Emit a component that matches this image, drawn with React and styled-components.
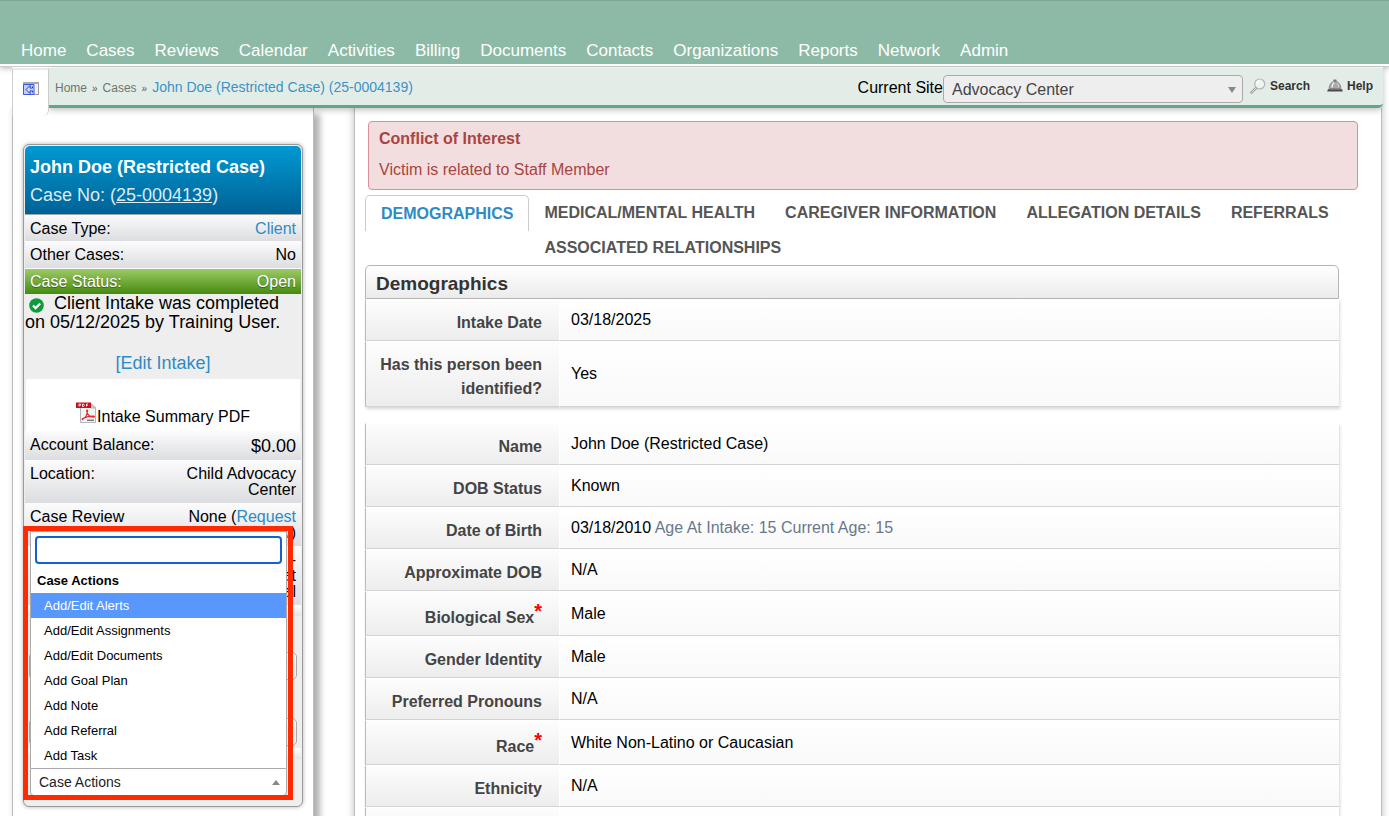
import React, { useState } from 'react'
import styled, { createGlobalStyle, css } from 'styled-components'

const navLinks = ['Home', 'Cases', 'Reviews', 'Calendar', 'Activities', 'Billing', 'Documents', 'Contacts', 'Organizations', 'Reports', 'Network', 'Admin']

const tabs = ['MEDICAL/MENTAL HEALTH', 'CAREGIVER INFORMATION', 'ALLEGATION DETAILS', 'REFERRALS', 'ASSOCIATED RELATIONSHIPS']

const actions = ['Add/Edit Alerts', 'Add/Edit Assignments', 'Add/Edit Documents', 'Add Goal Plan', 'Add Note', 'Add Referral', 'Add Task']

const intakeRows = [
  { label: 'Intake Date', value: '03/18/2025' },
  { label: 'Has this person been identified?', value: 'Yes' },
]

const personRows = [
  { label: 'Name', value: 'John Doe (Restricted Case)' },
  { label: 'DOB Status', value: 'Known' },
  { label: 'Date of Birth', value: '03/18/2010', note: 'Age At Intake: 15 Current Age: 15' },
  { label: 'Approximate DOB', value: 'N/A' },
  { label: 'Biological Sex', value: 'Male', required: true },
  { label: 'Gender Identity', value: 'Male' },
  { label: 'Preferred Pronouns', value: 'N/A' },
  { label: 'Race', value: 'White Non-Latino or Caucasian', required: true },
  { label: 'Ethnicity', value: 'N/A' },
  { label: '', value: '' },
]

const CollapseIcon = () => (
  <svg width="16" height="13" viewBox="0 0 16 13" aria-hidden="true">
    <rect x="0.5" y="0.5" width="15" height="12" fill="#f3f4fa" stroke="#9a9aa0" />
    <path d="M0 1h16" stroke="#a9a9ae" strokeWidth="2" />
    <path d="M.5 2.500v10H11v-10z" fill="#c3ceff" stroke="#3c57e6" />
    <path d="M3 7.500L7 3.500v2.500h2.500V4.500M7 9v2.500L3 7.500M7 9h2.500v1.500" fill="#fff" stroke="#1c36b8" />
  </svg>
)

const SearchIcon = () => (
  <svg width="16" height="16" viewBox="0 0 16 16" aria-hidden="true">
    <path d="M6.4 9.6L1.4 14.6" stroke="#9a9a9a" strokeWidth="2.4" strokeLinecap="round" />
    <path d="M6.4 9.6L1.6 14.4" stroke="#e3e3e3" strokeWidth="1" strokeLinecap="round" />
    <circle cx="9.7" cy="6" r="5" fill="#eef4f2" stroke="#b3b3b3" strokeWidth="1.2" />
    <path d="M6.8 6a3 3 0 0 1 3-3" fill="none" stroke="#fff" strokeWidth="1.2" />
  </svg>
)

const BellIcon = () => (
  <svg width="16" height="14" viewBox="0 0 16 14" aria-hidden="true">
    <rect x="6.3" y="0.5" width="3.4" height="2" rx="1" fill="#777" />
    <path d="M2.2 9.5C2.2 5 5 2.5 8 2.5s5.800 2.500 5.800 7z" fill="#a9a9a9" stroke="#777" strokeWidth="0.8" />
    <path d="M5 8.500c0-2.600.8-4 2.200-5" stroke="#f4f4f4" strokeWidth="1.4" fill="none" />
    <path d="M10 4c1.200 1.200 1.700 2.600 1.700 4.500" stroke="#d6d6d6" strokeWidth="1" fill="none" />
    <path d="M1 10h14l.8 2.500H.2z" fill="#4c4c50" />
    <path d="M1.500 10.300h13" stroke="#8b8b8f" strokeWidth="0.7" />
  </svg>
)

const CheckIcon = () => (
  <svg width="15" height="15" viewBox="0 0 15 15" aria-hidden="true">
    <circle cx="7.5" cy="7.5" r="7.3" fill="#0d9c39" />
    <path d="M4 7.500l2.600 2.600L11.200 5.400" fill="none" stroke="#fff" strokeWidth="2.200" />
  </svg>
)

const PdfIcon = () => (
  <svg width="21" height="21" viewBox="0 0 21 21" aria-hidden="true">
    <path d="M4.500 1.500H15l4.500 4.500v14.500h-15z" fill="#f3f3f3" stroke="#b5b5b5" />
    <path d="M15 1.500V6h4.500z" fill="#d2d2d2" stroke="#aaa" strokeWidth="0.8" />
    <rect x="0" y="0.5" width="15" height="5.500" fill="#c5141b" />
    <path d="M3 4.500V2h1.500v1.300H3M6.500 2v2.500h1L8.300 3.300 7.500 2zM10.500 4.500V2H12M10.500 3.300h1.300" fill="none" stroke="#fff" strokeWidth="0.8" />
    <path d="M6.500 17.500c2.600-1.700 4.700-5 5.100-8.800.1-1-1.200-1-1 .1.700 3.800 3.200 6 7.200 6.300.9 0 .8-1-.1-1-3.800-.1-7.700.8-10.800 2.400-1 .6-.9 1.300-.4 1z" fill="none" stroke="#e0282e" strokeWidth="1.100" />
    <path d="M11 18.300h7" stroke="#777" strokeWidth="1.400" />
  </svg>
)

const DataTable = ({ rows }) => (
  <Table>
    <tbody>
      {rows.map((row) => (
        <tr key={row.label}>
          <Label scope="row">
            {row.label}
            {row.required && <Star>*</Star>}
          </Label>
          <Value>
            {row.value}
            {row.note && <Note> {row.note}</Note>}
          </Value>
        </tr>
      ))}
    </tbody>
  </Table>
)

const App = () => {

  const [active, setActive] = useState(actions[0])
  const [filter, setFilter] = useState('')

  const shown = actions.filter((ele) => ele.toLowerCase().includes(filter.toLowerCase()))

  return (
    <>
      <GlobalStyle />
      <Page>
        <Nav aria-label="Main">
          {navLinks.map((ele) => {
            return <NavLink key={ele} href="#">{ele}</NavLink>
          })}
        </Nav>
        <Shell>
          <Header>
            <CollapseTab aria-label="Collapse sidebar"><CollapseIcon /></CollapseTab>
            <Toolbar>
              <Crumbs aria-label="Breadcrumb">
                <Crumb href="#">Home</Crumb>
                <Sep>»</Sep>
                <Crumb href="#">Cases</Crumb>
                <Sep>»</Sep>
                <Crumb href="#" $current>John Doe (Restricted Case) (25-0004139)</Crumb>
              </Crumbs>
              <SiteLabel htmlFor="site">Current Site</SiteLabel>
              <SelectWrap>
                <SiteSelect id="site">
                  <option>Advocacy Center</option>
                </SiteSelect>
              </SelectWrap>
              <Tools>
                <ToolLink href="#"><SearchIcon />Search</ToolLink>
                <ToolLink href="#"><BellIcon />Help</ToolLink>
              </Tools>
            </Toolbar>
          </Header>
          <Columns>
            <Sidebar>
              <Card>
                <CardHead>
                  <CardTitle>John Doe (Restricted Case)</CardTitle>
                  <CaseNo>Case No: (<a href="#">25-0004139</a>)</CaseNo>
                </CardHead>
                <InfoRow $first><span>Case Type:</span><Link href="#">Client</Link></InfoRow>
                <InfoRow><span>Other Cases:</span><span>No</span></InfoRow>
                <InfoRow $status><span>Case Status:</span><span>Open</span></InfoRow>
                <Intake>
                  <IntakeText><CheckIcon /> Client Intake was completed on 05/12/2025 by Training User.</IntakeText>
                  <Link href="#">[Edit Intake]</Link>
                </Intake>
                <Pdf href="#"><PdfIcon />Intake Summary PDF</Pdf>
                <InfoRow><span>Account Balance:</span><Amount>$0.00</Amount></InfoRow>
                <InfoRow><span>Location:</span><Right>Child Advocacy Center</Right></InfoRow>
                <InfoRow><span>Case Review</span><Right>None (<Link href="#">Request Now</Link>)</Right></InfoRow>
                <InfoRow><span /><Right>-<br />at<br />al</Right></InfoRow>
                <Divider />
                <Field><SideSelect aria-label="Assignment" /></Field>
                <Field><SideSelect aria-label="Status" /></Field>
                <Divider />
                <ActionsBox>
                  <ActionsMenu>
                    <FilterBox>
                      <FilterInput aria-label="Filter actions" value={filter} onChange={(e) => setFilter(e.target.value)} />
                    </FilterBox>
                    <GroupName>Case Actions</GroupName>
                    {shown.map((ele) => {
                      return (
                        <Action key={ele} $on={ele === active} onMouseEnter={() => setActive(ele)}>{ele}</Action>
                      )
                    })}
                  </ActionsMenu>
                  <ActionsButton aria-expanded="true">Case Actions</ActionsButton>
                  <Highlight />
                </ActionsBox>
              </Card>
            </Sidebar>
            <Main>
              <Alert role="alert">
                <strong>Conflict of Interest</strong>
                <p>Victim is related to Staff Member</p>
              </Alert>
              <Tabs role="tablist">
                <ActiveTab role="tab" aria-selected="true">DEMOGRAPHICS</ActiveTab>
                <TabGroup>
                  {tabs.map((ele) => {
                    return <Tab key={ele} role="tab" aria-selected="false">{ele}</Tab>
                  })}
                </TabGroup>
              </Tabs>
              <Section>
                <SectionTitle>Demographics</SectionTitle>
                <DataTable rows={intakeRows} />
                <DataTable rows={personRows} />
              </Section>
            </Main>
          </Columns>
        </Shell>
      </Page>
    </>
  )
}

const GlobalStyle = createGlobalStyle`
* {
box-sizing: border-box;
}
body {
margin: 0;
background: #FFFFFF;
color: #000000;
font-family: "Liberation Sans", Arial, sans-serif;
font-size: 16px;
}
button, input, select {
font-family: inherit;
}
`

const Page = styled.div`
height: 100vh;
overflow-x: hidden;
overflow-y: auto;
scrollbar-width: none;
`

const Nav = styled.nav`
display: flex;
align-items: flex-end;
gap: 20px;
height: 66px;
padding: 0 21px 3px;
background: #8DBAA6;
border-top: 1px solid #7CA593;
border-bottom: 2px solid #FFFFFF;
box-shadow: 0 1px 0 #CCCCCC, 0 2px 6px rgba(0, 0, 0, 0.3);
`

const NavLink = styled.a`
font-size: 17px;
line-height: 20px;
color: #FFFFFF;
text-decoration: none;
`

const Shell = styled.div`
position: relative;
margin: 1px 6px 0 12px;
`

const Header = styled.header`
position: relative;
z-index: 1;
display: flex;
align-items: flex-start;
margin-bottom: -8px;
border-top: 1px solid #FFFFFF;
`

const CollapseTab = styled.button`
position: relative;
z-index: 1;
width: 37px;
height: 48px;
padding: 0 0 7px;
background: #FFFFFF;
border: 1px solid #CCCCCC;
border-top: 2px solid #E3EDE7;
border-bottom: none;
border-bottom-right-radius: 6px;
`

const Toolbar = styled.div`
flex: 1;
display: flex;
align-items: center;
height: 40px;
padding-right: 10px;
background: #E3EDE7;
border-bottom: 3px solid #66A388;
border-bottom-right-radius: 5px;
box-shadow: 0 2px 6px rgba(0, 0, 0, 0.25);
`

const Crumbs = styled.nav`
flex: 1;
display: flex;
align-items: baseline;
gap: 5px;
padding-left: 6px;
`

const Crumb = styled.a`
font-size: ${(p) => (p.$current ? '14px' : '12px')};
color: ${(p) => (p.$current ? '#3D92C6' : '#6F7471')};
text-decoration: none;
`

const Sep = styled.span`
font-size: 10px;
color: #555555;
`

const SiteLabel = styled.label`
padding-top: 2px;
`

const SelectWrap = styled.div`
position: relative;
width: 300px;
&::after {
content: '';
position: absolute;
top: 16px;
right: 7px;
border: 4px solid transparent;
border-top: 6px solid #888888;
border-bottom: none;
pointer-events: none;
}
`

const SiteSelect = styled.select`
appearance: none;
display: block;
width: 100%;
height: 28px;
margin-top: 4px;
padding: 2px 8px 0;
font-size: 16px;
color: #444444;
background: #EEEEEE;
border: 1px solid #AAAAAA;
border-radius: 4px;
`

const Tools = styled.div`
display: flex;
gap: 17px;
padding: 0 0 2px 7px;
`

const ToolLink = styled.a`
display: flex;
align-items: center;
gap: 4px;
font-size: 12px;
font-weight: bold;
color: #333333;
text-decoration: none;
`

const Columns = styled.div`
display: flex;
gap: 40px;
margin-right: 1px;
`

const Sidebar = styled.aside`
flex: none;
width: 302px;
min-height: 730px;
padding: 36px 10px 60px;
border: 1px solid #BBBBBB;
border-top: none;
box-shadow: 6px 6px 6px rgba(0, 0, 0, 0.3), -2px 0 4px rgba(0, 0, 0, 0.06);
`

const Card = styled.section`
padding: 1px;
background: #EEEEEE;
border: 1px solid #999999;
border-radius: 6px;
box-shadow: 0 0 4px rgba(0, 0, 0, 0.3);
`

const CardHead = styled.div`
padding: 8px 5px 6px;
color: #FFFFFF;
background: linear-gradient(#0099D2, #006296);
border-radius: 5px 5px 0 0;
`

const CardTitle = styled.h1`
margin: 0 0 2px;
font-size: 18px;
line-height: 26px;
`

const CaseNo = styled.div`
font-size: 18px;
line-height: 26px;
color: #DCEBF3;
a {
color: inherit;
}
`

const Link = styled.a`
color: #2E8BC4;
text-decoration: none;
`

const InfoRow = styled.div`
display: flex;
justify-content: space-between;
align-items: flex-start;
padding: 5px;
line-height: 16px;
background: linear-gradient(#FBFBFC, #DCDDE0);
border-top: 1px solid #FBFBFC;
${(p) => p.$first && css`
padding: 6px 5px 4px;
border-top: 1px solid #A5A5A5;
`}
${(p) => p.$status && css`
padding-bottom: 4px;
color: #FFFFFF;
text-shadow: 0 1px 1px rgba(0, 0, 0, 0.4);
background: linear-gradient(#9CCB65, #468A0F);
`}
`

const Right = styled.span`
width: 116px;
text-align: right;
`

const Amount = styled.span`
font-size: 18px;
line-height: 18px;
`

const Intake = styled.div`
padding-bottom: 6px;
font-size: 18px;
line-height: 19px;
text-align: center;
`

const IntakeText = styled.p`
margin: 0 0 22px;
text-align: left;
svg {
margin: 0 5px 0 4px;
vertical-align: -4px;
}
`

const Pdf = styled.a`
display: flex;
justify-content: center;
align-items: flex-end;
height: 52px;
margin: 0 1px;
padding-bottom: 5px;
color: #000000;
background: #FFFFFF;
text-decoration: none;
svg {
margin-bottom: 3px;
}
`

const Divider = styled.div`
height: 11px;
background: linear-gradient(#FFFFFF, #E4E4E6);
`

const Field = styled.div`
height: 66px;
padding: 36px 4px 0;
`

const SideSelect = styled.select`
appearance: none;
display: block;
width: 100%;
height: 28px;
background: linear-gradient(#FFFFFF, #EEEEEE 50%, #F4F4F4);
border: 1px solid #AAAAAA;
border-radius: 5px;
`

const ActionsBox = styled.div`
position: relative;
margin: 9px 14px 9px 5px;
`

const ActionsMenu = styled.div`
position: absolute;
bottom: 100%;
left: 0;
right: 0;
background: #FFFFFF;
border: 1px solid #AAAAAA;
border-bottom: none;
`

const FilterBox = styled.div`
padding: 4px;
`

const FilterInput = styled.input`
display: block;
width: 100%;
height: 28px;
padding: 4px;
border: 2px solid #1162CC;
border-radius: 4px;
outline: none;
`

const GroupName = styled.div`
padding: 0 6px;
font-size: 13px;
font-weight: bold;
line-height: 25px;
`

const Action = styled.button`
display: block;
width: 100%;
padding: 0 13px;
font-size: 13px;
line-height: 25px;
text-align: left;
color: ${(p) => (p.$on ? '#FFFFFF' : '#000000')};
background: ${(p) => (p.$on ? '#5897FB' : '#FFFFFF')};
border: none;
`

const ActionsButton = styled.button`
display: flex;
justify-content: space-between;
align-items: center;
width: 100%;
height: 28px;
padding: 0 6px 0 8px;
font-size: 14px;
color: #222222;
background: #FFFFFF;
border: 1px solid #AAAAAA;
border-radius: 0 0 4px 4px;
&::after {
content: '';
border: 4px solid transparent;
border-bottom: 5px solid #888888;
border-top: none;
}
`

const Highlight = styled.div`
position: absolute;
top: -242px;
right: -6px;
bottom: -4px;
left: -7px;
border: 5px solid #FF2A00;
pointer-events: none;
`

const Main = styled.main`
flex: 1;
min-width: 0;
padding: 13px 23px 20px 10px;
border: 1px solid #BBBBBB;
border-top: none;
box-shadow: 0 0 8px rgba(0, 0, 0, 0.25);
`

const Alert = styled.div`
margin-left: 3px;
padding: 5px 10px 7px;
line-height: 24px;
color: #A94442;
background: #F2DEDE;
border: 1px solid #D9909A;
border-radius: 4px;
p {
margin: 7px 0 0;
}
`

const Tabs = styled.div`
display: flex;
align-items: flex-start;
margin-top: 5px;
`

const tabText = css`
font-size: 16px;
font-weight: bold;
line-height: 35px;
white-space: nowrap;
background: none;
`

const ActiveTab = styled.button`
${tabText}
flex: none;
padding: 0 15px;
color: #2E8BC4;
border: 1px solid #CCCCCC;
border-bottom: none;
border-radius: 5px 5px 0 0;
`

const TabGroup = styled.div`
display: flex;
flex-wrap: wrap;
`

const Tab = styled.button`
${tabText}
padding: 0 15px;
color: #555555;
border: none;
`

const Section = styled.section`
margin-right: 19px;
`

const SectionTitle = styled.h2`
margin: 0;
padding: 2px 10px 0;
height: 34px;
font-size: 19px;
line-height: 32px;
color: #333333;
background: linear-gradient(#FFFFFF, #EBEBEB);
border: 1px solid #B5B5B5;
border-radius: 5px 5px 0 0;
`

const Table = styled.table`
width: 100%;
margin-bottom: 16px;
border-collapse: separate;
border-spacing: 0;
box-shadow: 1px 2px 3px rgba(0, 0, 0, 0.16);
`

const Label = styled.th`
width: 195px;
height: 42px;
padding: 11px 17px 5px 11px;
line-height: 24px;
text-align: right;
color: #444444;
background: linear-gradient(#FDFDFD, #EDEDED);
border: 1px solid #D3D3D3;
border-top-color: #FFFFFF;
border-left-color: #BBBBBB;
border-right-color: #FFFFFF;
`

const Value = styled.td`
padding: 0 11px;
background: linear-gradient(#FFFFFF, #F9F9F9);
border-top: 1px solid #FFFFFF;
border-bottom: 1px solid #D3D3D3;
`

const Note = styled.span`
color: #68788C;
`

const Star = styled.sup`
font-size: 20px;
line-height: 17px;
vertical-align: 5px;
color: #FF0000;
`

export default App
